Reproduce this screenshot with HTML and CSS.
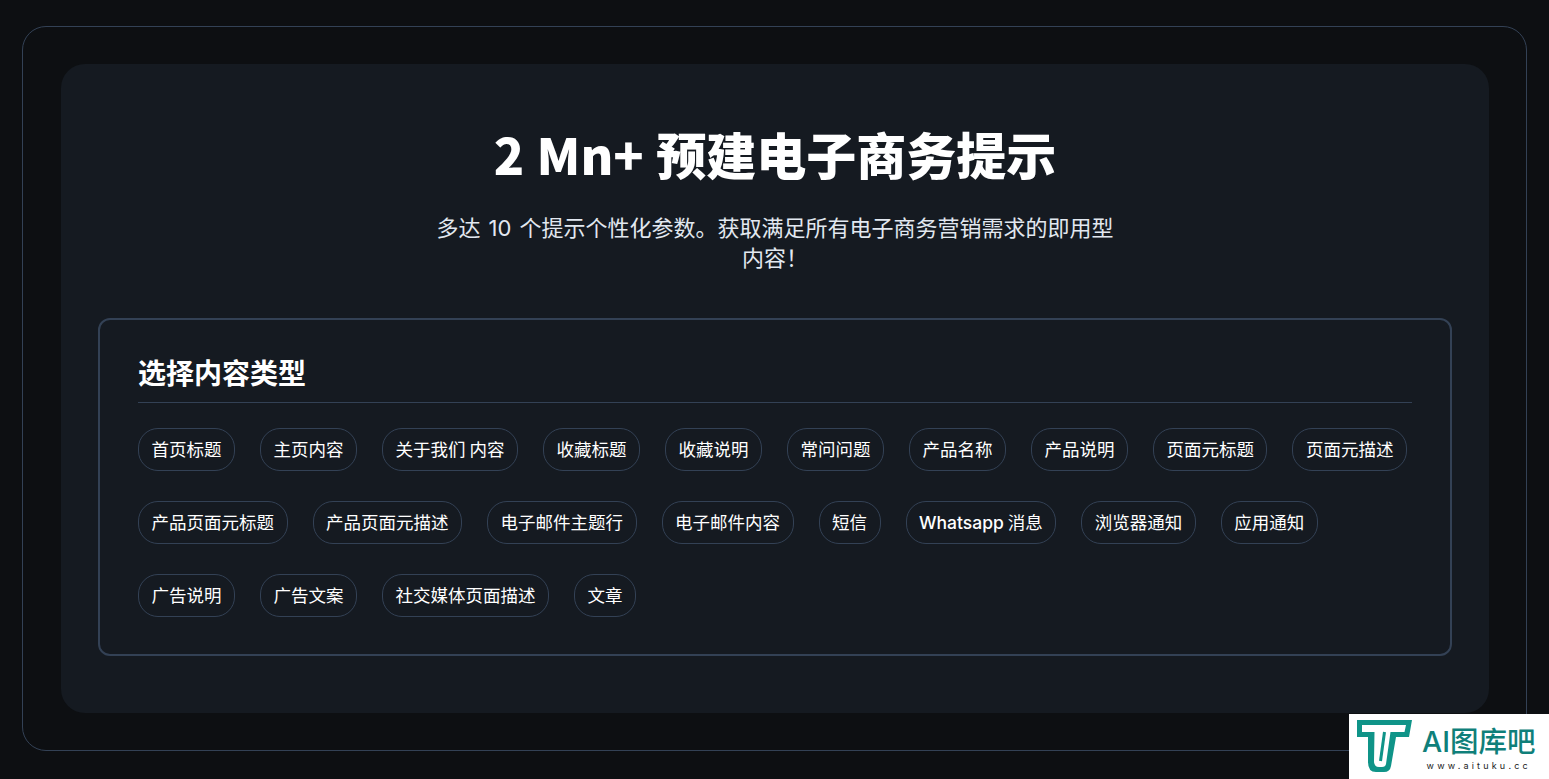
FILE: index.html
```html
<!DOCTYPE html>
<html lang="zh">
<head>
<meta charset="utf-8">
<title>2 Mn+ 预建电子商务提示</title>
<link rel="stylesheet" href="styles.css">
</head>
<body>
<div class="frame">
  <section class="card">
    <h1 class="title">2 Mn+ 预建电子商务提示</h1>
    <p class="subtitle">多达 10 个提示个性化参数。获取满足所有电子商务营销需求的即用型内容！</p>
    <div class="panel">
      <h2 class="panel-title">选择内容类型</h2>
      <div class="chips">
        <span class="chip">首页标题</span>
        <span class="chip">主页内容</span>
        <span class="chip">关于我们 内容</span>
        <span class="chip">收藏标题</span>
        <span class="chip">收藏说明</span>
        <span class="chip">常问问题</span>
        <span class="chip">产品名称</span>
        <span class="chip">产品说明</span>
        <span class="chip">页面元标题</span>
        <span class="chip">页面元描述</span>
        <span class="chip">产品页面元标题</span>
        <span class="chip">产品页面元描述</span>
        <span class="chip">电子邮件主题行</span>
        <span class="chip">电子邮件内容</span>
        <span class="chip">短信</span>
        <span class="chip"><span class="chip-latin">Whatsapp</span> 消息</span>
        <span class="chip">浏览器通知</span>
        <span class="chip">应用通知</span>
        <span class="chip">广告说明</span>
        <span class="chip">广告文案</span>
        <span class="chip">社交媒体页面描述</span>
        <span class="chip">文章</span>
      </div>
    </div>
  </section>
</div>
<div class="badge">
  <svg class="badge-logo" width="64" height="65" viewBox="0 0 64 65">
    <path class="logo-outer" d="M8 6H63L60 23H47L42 52Q41 58 35 58H27Q19 58 19 48V23H8Z"/>
    <path class="logo-gap" d="M13 11H57L55.500 18H41.500L37 50Q36.500 53 33 53H30Q25 53 25 47L25.500 18H13Z"/>
    <path class="logo-inner" d="M35.500 18L31.500 47"/>
  </svg>
  <div class="badge-text">
    <span class="badge-name">AI图库吧</span>
    <span class="badge-url">www.aituku.cc</span>
  </div>
</div>
</body>
</html>
```

FILE: styles.css
```css
* {
  box-sizing: border-box;
}

html,
body {
  margin: 0;
  height: 100%;
}

body {
  background: #0d0f12;
  color: #fff;
  font-family: Inter, "Noto Sans CJK SC", sans-serif;
  overflow: hidden;
  padding: 26px 22px 28px;
}

.frame {
  height: 725px;
  border: 1px solid #334155;
  border-radius: 24px;
  padding: 37px 37px 37px 38px;
}

.card {
  height: 649px;
  background: #151a21;
  border-radius: 24px;
  padding: 53px 37px 0;
  text-align: center;
}

.title {
  margin: 0;
  font-family: "Noto Sans CJK SC", sans-serif;
  font-size: 50px;
  line-height: 72px;
  font-weight: 900;
  word-spacing: 1px;
  color: #fff;
}

.subtitle {
  width: 680px;
  margin: 24px auto 0;
  font-size: 22px;
  line-height: 30px;
  word-spacing: 2px;
  color: #e2e8f0;
}

.panel {
  height: 338px;
  margin-top: 45px;
  border: 2px solid #334155;
  border-radius: 12px;
  padding: 34px 38px 0;
  text-align: left;
}

.panel-title {
  margin: 0;
  padding-bottom: 8px;
  border-bottom: 1px solid #334155;
  font-size: 28px;
  line-height: 40px;
  font-weight: 700;
}

.chips {
  display: flex;
  flex-wrap: wrap;
  gap: 30px 25px;
  margin-top: 25px;
}

.chip {
  height: 43px;
  padding: 0 12.5px;
  border: 1px solid #334155;
  border-radius: 20px;
  font-size: 17.5px;
  line-height: 41px;
  word-spacing: -1px;
  white-space: nowrap;
}

.chip-latin {
  font-weight: 500;
}

.badge {
  position: absolute;
  right: 0;
  bottom: 0;
  width: 200px;
  height: 65px;
  background: #fff;
  display: flex;
  align-items: center;
  gap: 9px;
}

.badge-logo {
  flex: none;
}

.logo-outer {
  fill: #0f9488;
}

.logo-gap {
  fill: #fff;
}

.logo-inner {
  fill: none;
  stroke: #0f9488;
  stroke-width: 3;
}

.badge-text {
  display: flex;
  flex-direction: column;
  align-items: center;
  padding-top: 3px;
}

.badge-name {
  color: #0f7f7a;
  font-size: 28.5px;
  line-height: 36px;
  font-weight: 500;
}

.badge-url {
  color: #222;
  font-size: 9px;
  line-height: 12px;
  letter-spacing: 3.2px;
}
```
